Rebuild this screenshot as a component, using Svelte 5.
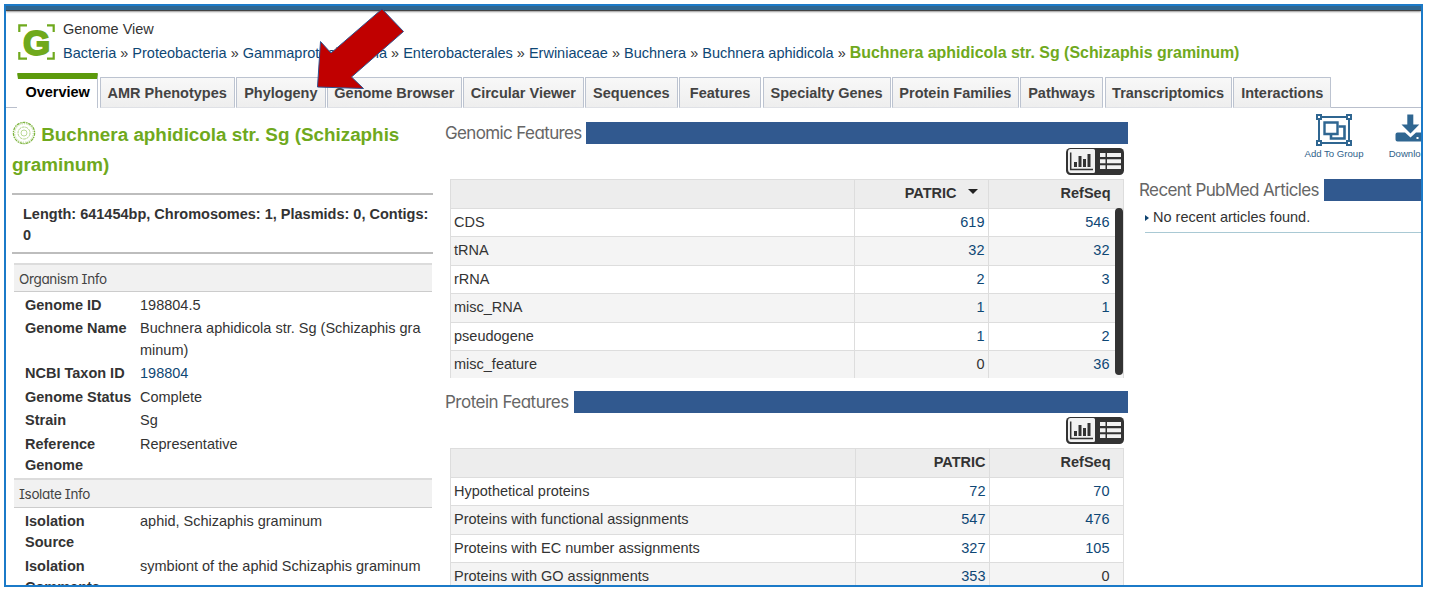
<script>
  const crumbs = ['Bacteria', 'Proteobacteria', 'Gammaproteobacteria', 'Enterobacterales', 'Erwiniaceae', 'Buchnera', 'Buchnera aphidicola'];
  const tabs = ['AMR Phenotypes', 'Phylogeny', 'Genome Browser', 'Circular Viewer', 'Sequences', 'Features', 'Specialty Genes', 'Protein Families', 'Pathways', 'Transcriptomics', 'Interactions'];
  const info = [
    { title: 'Organism Info', rows: [
      ['Genome ID', '198804.5'],
      ['Genome Name', 'Buchnera aphidicola str. Sg (Schizaphis graminum)'],
      ['NCBI Taxon ID', '198804', true],
      ['Genome Status', 'Complete'],
      ['Strain', 'Sg'],
      ['Reference Genome', 'Representative']
    ] },
    { title: 'Isolate Info', rows: [
      ['Isolation Source', 'aphid, Schizaphis graminum'],
      ['Isolation Comments', 'symbiont of the aphid Schizaphis graminum']
    ] }
  ];
  const genomic = [['CDS', 619, 546], ['tRNA', 32, 32], ['rRNA', 2, 3], ['misc_RNA', 1, 1], ['pseudogene', 1, 2], ['misc_feature', 0, 36]];
  const protein = [['Hypothetical proteins', 72, 70], ['Proteins with functional assignments', 547, 476], ['Proteins with EC number assignments', 327, 105], ['Proteins with GO assignments', 353, 0]];
</script>

{#snippet toggle()}
  <div class="toggle">
    <svg width="58" height="27" viewBox="0 0 58 27">
      <rect x="0" y="0" width="58" height="27" rx="4.5" fill="#333" />
      <path d="M4.5 1H27.500a1.500 1.500 0 0 1 1.500 1.500V23.500a1.500 1.500 0 0 1-1.500 1.500H5Q2 25 2 21V4Q2 1 4.500 1Z" fill="#f2f2f2" />
      <path d="M4.700 4.500V21.500H27" fill="none" stroke="#333" stroke-width="1.500" />
      <path d="M8 14h3v5H8zM12.500 8h3v11h-3zM17 11h3v8h-3zM21.500 6h3v13h-3z" fill="#333" />
      <path d="M34 5h5.500v4H34zM41 5h14v4H41zM34 11.200h5.500v4H34zM41 11.200h14v4H41zM34 17.200h5.500v3.800H34zM41 17.200h14v3.800H41z" fill="#f2f2f2" />
    </svg>
  </div>
{/snippet}

{#snippet grid(rows, sorted)}
  <div class="grid" class:sorted>
    <div class="row head"><span></span><span>PATRIC{#if sorted}<i class="caret"></i>{/if}</span><span>RefSeq</span></div>
    <div class="body">
      {#each rows as r}
        <div class="row"><span>{r[0]}</span><span class:link={r[1]}>{r[1]}</span><span class:link={r[2]}>{r[2]}</span></div>
      {/each}
    </div>
    {#if sorted}<div class="thumb"></div>{/if}
  </div>
{/snippet}

<div class="frame">
  <div class="topbar"></div>
  <header>
    <svg class="logo" width="38" height="36" viewBox="0 0 38 36">
      <path d="M1.300 8V1.300H9M29 1.300h6.700V8M1.300 28v6.700H9M29 34.700h6.700V28" fill="none" stroke="#6fa91d" stroke-width="2.200" />
      <text x="18.500" y="30.500" text-anchor="middle">G</text>
    </svg>
    <div class="heading">
      <div>Genome View</div>
      <nav>{#each crumbs as c}<span class="link">{c}</span>{' » '}{/each}<b>Buchnera aphidicola str. Sg (Schizaphis graminum)</b></nav>
    </div>
  </header>
  <div class="tabs">
    <div class="edge"></div>
    <div class="tab active">Overview</div>
    {#each tabs as t}<div class="tab">{t}</div>{/each}
    <div class="edge"></div>
  </div>

  <main>
    <section class="summary">
      <h1>
        <svg width="24" height="24" viewBox="0 0 24 24" fill="none" stroke="#7fb541">
          <circle cx="12" cy="12" r="10.600" stroke-width="1.300" stroke-dasharray="3 .8 1.500 .7" />
          <circle cx="12" cy="12" r="9.200" stroke-width=".6" stroke-dasharray="1 1.400" />
          <circle cx="12" cy="12" r="6" stroke-width=".9" stroke="#a9cf7c" stroke-dasharray="3 .6" />
          <circle cx="12" cy="12" r="3" stroke-width=".8" stroke="#a9cf7c" />
        </svg>
        Buchnera aphidicola str. Sg (Schizaphis graminum)
      </h1>
      <div class="stats">Length: 641454bp, Chromosomes: 1, Plasmids: 0, Contigs: 0</div>
      {#each info as s}
        <h3>{s.title}</h3>
        <dl>
          {#each s.rows as r}<dt>{r[0]}</dt><dd class:link={r[2]}>{r[1]}</dd>{/each}
        </dl>
      {/each}
    </section>

    <section class="features">
      <h2><span class="t1">Genomic Features</span></h2>
      {@render toggle()}
      {@render grid(genomic, true)}
      <h2 class="second"><span class="t2">Protein Features</span></h2>
      {@render toggle()}
      {@render grid(protein, false)}
    </section>

    <aside>
      <div class="actions">
        <div class="action">
          <svg width="38" height="34" viewBox="0 0 38 34" fill="none" stroke="#2f6691">
            <path d="M4 4H34V30H4Z" stroke-width="2" />
            <path d="M23.500 13.500H29.500V25.500H16V21.500" stroke-width="2.600" />
            <path d="M9.500 9.500H22.500V21H9.500Z" stroke-width="2.400" />
            <g fill="#fff" stroke-width="2"><path d="M2 2h4v4H2zM32 2h4v4h-4zM2 28h4v4H2zM32 28h4v4h-4z" /></g>
          </svg>
          <span>Add To Group</span>
        </div>
        <div class="action">
          <svg width="31" height="34" viewBox="0 0 31 34">
            <path d="M12.300 1.500h6v10h6L15.500 20.500 6.500 11.500h5.800z" fill="#2f6691" />
            <path d="M2.500 19.500H10L15.500 24.500 21 19.500h7.500q2 0 2 2v5q0 2-2 2h-26q-2 0-2-2v-5q0-2 2-2Z" fill="#2f6691" />
            <path d="M21.500 24h2v2h-2zM26 24h2v2h-2z" fill="#fff" />
          </svg>
          <span>Download</span>
        </div>
      </div>
      <h2><span class="t3">Recent PubMed Articles</span></h2>
      <div class="article"><i></i>No recent articles found.</div>
    </aside>
  </main>

  <svg class="arrow" width="90" height="84" viewBox="316 7 90 84">
    <path d="M317.500 87 320.500 41.500 331 53 382 9 403.500 31.500 351.500 77 363.500 88.500Z" fill="#c00000" stroke="#2f528f" />
  </svg>
</div>

<style>
  :global(body) { background: #fff; overflow: hidden; }
  .frame { position: relative; box-sizing: border-box; width: 1419px; height: 583px; margin: 4px 0 0 4px; border: 2px solid #1b7ac8; overflow: hidden; font: 14.5px/21.5px "Liberation Sans", Arial, sans-serif; color: #333; background: #fff; }
  .topbar { height: 4px; background: #2f6690; border-bottom: 1px solid #444; box-shadow: 0 1px 2px #999; }
  header { display: flex; height: 62px; box-sizing: border-box; padding: 13px 0 0 12px; }
  .logo { flex: none; }
  .logo text { font: 900 35px "Liberation Sans", Arial, sans-serif; fill: #6fa91d; stroke: #6fa91d; stroke-width: 1.8px; }
  .heading { margin: -6px 0 0 7px; line-height: 23px; white-space: nowrap; }
  .link { color: #0e4775; }
  nav b { color: #6fa91d; font-size: 15.95px; }

  .tabs { display: grid; grid-template-columns: 11px 79.800px 134.800px 89.500px 134.500px 120.500px 92.500px 82px 128px 126.500px 83px 127px 98.300px 1fr; column-gap: 1.500px; height: 35px; align-items: end; }
  .tab { box-sizing: border-box; height: 31px; border: 1.500px solid #bcc3d0; border-bottom-color: #dfe1e6; background: linear-gradient(#f8f8f8, #eee); font-weight: bold; line-height: 31px; text-align: center; color: #434343; white-space: nowrap; border-radius: 1px 1px 0 0; }
  .tab.active { height: 35px; margin-left: -1.500px; border-top: 6px solid #5c9a0c; border-left-color: #fff; border-bottom: 0; background: #fff; color: #000; line-height: 27px; }
  .edge { height: 1px; background: #b9bfcc; }
  .edge:last-child { margin-left: -2px; }

  main { display: grid; grid-template-columns: 421px 701px 1fr; height: 477px; }
  .summary { padding-left: 6px; width: 421px; }
  h1 { margin: 12px 0 13px; font-size: 18.85px; line-height: 29.8px; color: #6fa91d; }
  h1 svg { display: inline-block; vertical-align: -4px; margin-right: 0; }
  .stats { box-sizing: border-box; height: 61.5px; border: solid #bdbdbd; border-width: 2px 0; padding: 9px 0 0 11px; font-weight: bold; white-space: normal; }
  h3 { box-sizing: border-box; margin: 0 1px 0 2px; height: 29.5px; border-top: 2px solid #dcdcdc; border-bottom: 1px solid #ccc; background: #f1f1f1; padding-left: 5px; font: 13.5px/28px Inter, sans-serif; font-feature-settings: "cv11", "cv08"; letter-spacing: -.35px; color: #444; }
  .stats + h3 { margin-top: 8.5px; }
  dl { display: grid; grid-template-columns: 115px 285px; margin: 0 0 .8px 13px; padding-top: 2px; }
  dt, dd { margin: 0; padding: 1px 0 .9px; }
  dt { font-weight: bold; padding-right: 8px; white-space: normal; }
  dd { word-break: break-all; }
  dl + h3 { margin-top: 0; }

  .features { padding: 13px 0 0 18px; }
  h2 { display: flex; margin: 0; height: 23px; font: 17px/23px Inter, sans-serif; font-feature-settings: "cv11"; color: #666; white-space: nowrap; }
  h2 span { flex: none; padding-top: 1px; }
  h2::after { content: ""; flex: 1; background: #31598f; height: 22px; margin-top: .5px; }
  .t1 { width: 141px; letter-spacing: -.62px; }
  .t2 { width: 129px; letter-spacing: -.5px; }
  .t3 { width: 185px; letter-spacing: -.6px; }
  .toggle { display: flex; justify-content: flex-end; padding: 4px 4px 0 0; height: 27px; }
  .grid { position: relative; margin: 4px 4px 0 5px; border: 1px solid #ddd; }
  .grid.sorted { height: 197px; }
  .row { display: grid; grid-template-columns: 404.500px 134px 1fr; height: 28.500px; line-height: 26.500px; box-sizing: border-box; border-bottom: 1px solid #ddd; }
  .row:nth-child(even) { background: #f4f4f4; }
  .sorted .row { grid-template-columns: 403.500px 134px 1fr; }
  .sorted .body .row:last-child { border: 0; height: 26.500px; }
  .row span { box-sizing: border-box; text-align: right; padding-right: 3px; border-right: 1px solid #ddd; }
  .row span:first-child { text-align: left; padding-left: 3px; }
  .row span:last-child { border: 0; padding-right: 12.500px; }
  .body .row span:last-child { padding-right: 13.500px; }
  .row.head { background: #ededed; font-weight: bold; }
  .caret { display: inline-block; border: 5px solid transparent; border-top-color: #222; border-bottom: 0; margin: 0 7px 4px 11px; }
  .thumb { position: absolute; right: 0; top: 28px; width: 8px; height: 167px; border-radius: 4px; background: #333; }
  .second { margin-top: 12px; }

  aside { padding: 5px 0 0 11px; min-width: 0; overflow: hidden; }
  .actions { display: flex; padding-left: 165px; height: 65px; gap: 16px; }
  .action { width: 60px; flex: none; display: flex; flex-direction: column; align-items: center; font-size: 9.600px; line-height: 14px; color: #2f5f8a; white-space: nowrap; }
  .article { margin-left: 6px; height: 32px; box-sizing: border-box; border-bottom: 1px solid #a9c9d4; padding-top: 6px; display: flex; align-items: baseline; }
  .article i { position: relative; top: -1px; border: 3px solid transparent; border-left: 4px solid #0e4370; border-right: 0; margin-right: 4px; }
  .arrow { position: absolute; left: 310px; top: 1px; }
</style>
